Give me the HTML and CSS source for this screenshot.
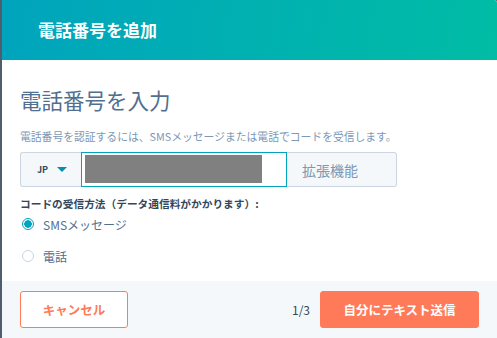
FILE: index.html
```html
<!DOCTYPE html>
<html lang="ja">
<head>
    <meta charset="UTF-8">
    <meta name="viewport" content="width=device-width, initial-scale=1.0">
    <title>電話番号を追加</title>
    <link rel="stylesheet" href="styles.css">
</head>
<body>

    <div class="modal">
        <header class="modalHeader">
            <h1>電話番号を追加</h1>
        </header>

        <section class="modalBody">
            <h2>電話番号を入力</h2>
            <p class="hint">電話番号を認証するには、SMSメッセージまたは電話でコードを受信します。</p>

            <div class="phoneRow">
                <div class="countrySelect">
                    <span>JP</span>
                    <span class="caret"></span>
                </div>
                <div class="phoneInput">
                    <div class="masked"></div>
                </div>
                <div class="extension">拡張機能</div>
            </div>

            <p class="methodLabel">コードの受信方法（データ通信料がかかります）:</p>
            <label class="radioRow">
                <span class="radio checked"></span>
                <span>SMSメッセージ</span>
            </label>
            <label class="radioRow">
                <span class="radio"></span>
                <span>電話</span>
            </label>
        </section>

        <footer class="modalFooter">
            <button class="btnSecondary">キャンセル</button>
            <div class="footerRight">
                <span class="step">1/3</span>
                <button class="btnPrimary">自分にテキスト送信</button>
            </div>
        </footer>
    </div>

</body>
</html>
```

FILE: styles.css
```css
body {
    margin: 0;
    padding: 0;
    background-color: #4f5d6c;
    font-family: "Noto Sans CJK JP", "Noto Sans", sans-serif;
    color: #33475b;
}

.modal {
    margin-left: 2px;
    height: 338px;
    display: flex;
    flex-direction: column;
    background-color: #fff;
    border-top-right-radius: 3px;
    overflow: hidden;
}

.modalHeader {
    height: 60px;
    flex: none;
    display: flex;
    align-items: center;
    padding-left: 36px;
    background: linear-gradient(100deg, #00a4bd 0%, #00bda5 100%);
}

.modalHeader h1 {
    margin: 0;
    font-size: 17px;
    font-weight: 700;
    color: #fff;
    line-height: 22px;
}

.modalBody {
    flex: 1;
    padding: 27px 18px 0;
}

.modalBody h2 {
    margin: 0;
    font-size: 21.5px;
    font-weight: 400;
    line-height: 26px;
    color: #516f90;
}

.hint {
    margin: 16px 0 0;
    font-size: 10.8px;
    line-height: 14px;
    color: #7c98b6;
    white-space: nowrap;
}

.phoneRow {
    display: flex;
    margin-top: 9px;
    height: 35px;
}

.countrySelect {
    width: 61px;
    box-sizing: border-box;
    display: flex;
    align-items: center;
    gap: 9px;
    padding-left: 16px;
    background-color: #f5f8fa;
    border: 1px solid #cbd6e2;
    border-right: none;
    border-radius: 3px 0 0 3px;
    font-size: 9px;
    font-weight: 700;
    color: #33475b;
}

.caret {
    width: 0;
    height: 0;
    border-left: 5px solid transparent;
    border-right: 5px solid transparent;
    border-top: 5px solid #0091ae;
}

.phoneInput {
    width: 206px;
    box-sizing: border-box;
    border: 1px solid #00a4bd;
    padding: 2px 24px 3px 3px;
    background-color: #fff;
}

.masked {
    height: 100%;
    background-color: #808080;
}

.extension {
    width: 110px;
    box-sizing: border-box;
    display: flex;
    align-items: center;
    padding-left: 15px;
    background-color: #f5f8fa;
    border: 1px solid #cbd6e2;
    border-left: none;
    border-radius: 0 3px 3px 0;
    font-size: 14px;
    color: #7c98b6;
}

.methodLabel {
    margin: 10px 0 0;
    font-size: 10.7px;
    font-weight: 700;
    line-height: 14px;
    color: #33475b;
}

.radioRow {
    display: flex;
    align-items: center;
    gap: 9px;
    height: 20px;
    margin-top: 3px;
    font-size: 12px;
    color: #516f90;
}

.radioRow + .radioRow {
    margin-top: 12px;
}

.radio {
    width: 12px;
    height: 12px;
    box-sizing: border-box;
    border-radius: 50%;
    border: 1px solid #cbd6e2;
    margin-left: 2px;
    background-color: #fff;
}

.radio.checked {
    border-color: #00a4bd;
    background: radial-gradient(circle, #00a4bd 0 3.5px, #fff 4px);
}

.modalFooter {
    height: 57px;
    flex: none;
    box-sizing: border-box;
    display: flex;
    justify-content: space-between;
    align-items: flex-start;
    padding: 10px 18px 0;
    background-color: #f5f8fa;
}

.footerRight {
    display: flex;
    align-items: center;
    gap: 10px;
}

.step {
    font-size: 12px;
    color: #33475b;
}

button {
    font-family: inherit;
    font-size: 12.5px;
    font-weight: 700;
    height: 37px;
    border-radius: 3px;
    cursor: pointer;
}

.btnSecondary {
    width: 108px;
    background-color: #fff;
    border: 1px solid #ff7a59;
    color: #ff7a59;
}

.btnPrimary {
    width: 159px;
    background-color: #ff7a59;
    border: 1px solid #ff7a59;
    color: #fff;
}
```
